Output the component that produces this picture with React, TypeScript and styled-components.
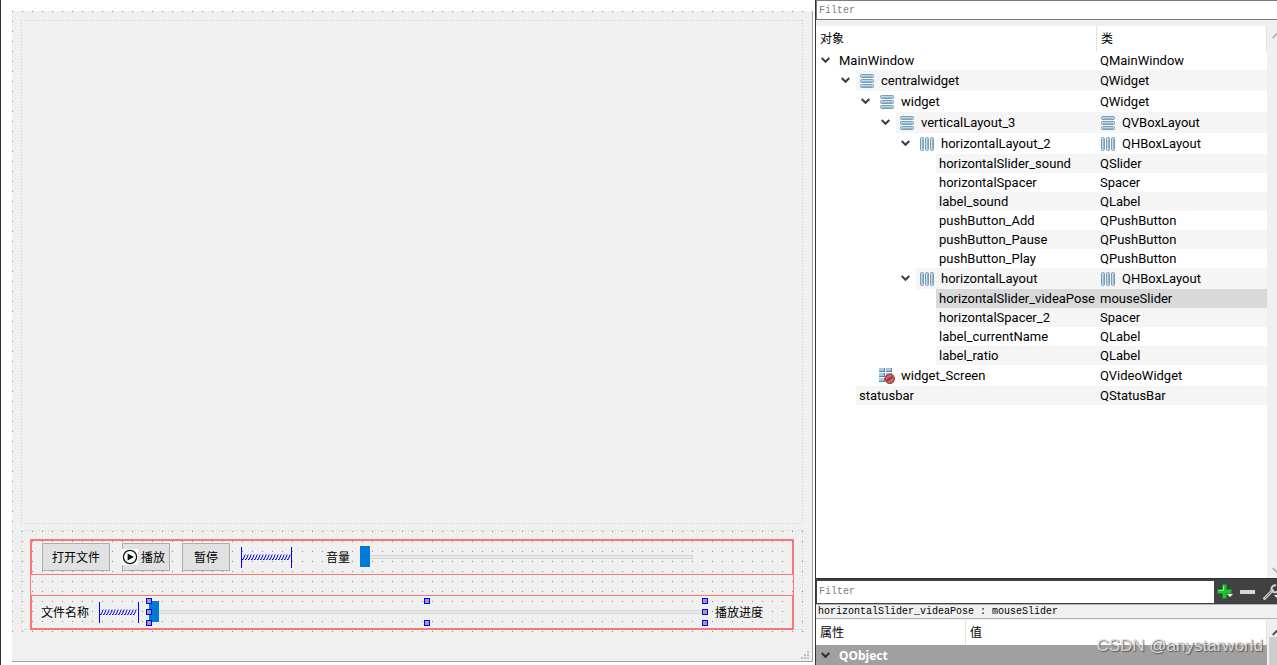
import React from "react";
import styled, { createGlobalStyle, css } from "styled-components";

const GlobalStyle = createGlobalStyle`
  * { box-sizing: border-box; }
  body {
    margin: 0;
    background: #fff;
    color: #000;
    font: 12px/18px "Noto Sans CJK SC", sans-serif;
    overflow: hidden;
  }
  button, input { font: inherit; color: inherit; margin: 0; }
`;

const Window = styled.div`
  display: flex;
  height: 100vh;
`;

/* ---------- form canvas ---------- */

const Canvas = styled.main`
  display: flex;
  flex: 1;
  min-width: 0;
  padding: 11px 2px 3px 11px;
  border-left: 1px solid #303032;
`;

const Form = styled.div`
  position: relative;
  display: flex;
  flex: 1;
  min-width: 0;
  padding: 0 9px 29px 0;
  background: #f0f0f0;
  border-right: 1px solid #a0a0a0;
  border-bottom: 1px solid #a0a0a0;
`;

const SizeGrip = styled.svg`
  position: absolute;
  right: 3px;
  bottom: 2px;
`;

const Grid = styled.div`
  display: flex;
  flex: 1;
  flex-direction: column;
  gap: 6px;
  min-width: 0;
  padding: 9px 0 2px 9px;
  background:
    linear-gradient(to right, transparent 1px, #f0f0f0 1px) 0 0 / 10px 10px,
    linear-gradient(to bottom, #8c8c8c 1px, transparent 1px) 0 0 / 10px 10px;
`;

const dottedEdges = css`
  background-image:
    repeating-linear-gradient(to right, #cfcfcf 0 1px, transparent 1px 3px),
    repeating-linear-gradient(to right, #cfcfcf 0 1px, transparent 1px 3px),
    repeating-linear-gradient(to bottom, #cfcfcf 0 1px, transparent 1px 3px),
    repeating-linear-gradient(to bottom, #cfcfcf 0 1px, transparent 1px 3px);
  background-size: 100% 1px, 100% 1px, 1px 100%, 1px 100%;
  background-position: left top, left bottom, left top, right top;
  background-repeat: no-repeat;
`;

const VideoScreen = styled.section`
  flex: 1;
  background-color: #f0f0f0;
  ${dottedEdges}
`;

const ControlWidget = styled.section`
  padding: 9px 9px 0;
  ${dottedEdges}
`;

const RED = "rgba(255, 88, 88, 0.8)";

const LayoutRow = styled.div<{ $place: "top" | "bottom" }>`
  display: flex;
  align-items: center;
  gap: 10px;
  border: 2px solid ${RED};
  ${(p) =>
    p.$place === "top"
      ? css`
          height: 36px;
          padding: 0 99px 1px 10px;
          border-bottom-width: 1px;
        `
      : css`
          height: 35px;
          padding: 0 29px 0 9px;
          border-top-width: 1px;
        `}
`;

const LayoutGap = styled.div`
  height: 20px;
  border: solid ${RED};
  border-width: 0 1px;
`;

const ButtonGroup = styled.div`
  display: flex;
  gap: 12px;
  padding-right: 1px;
`;

const PushButton = styled.button<{ $icon?: boolean }>`
  display: flex;
  align-items: center;
  gap: 3px;
  height: 28px;
  padding: ${(p) => (p.$icon ? "0 4px 0 0" : "0 9px 0 9px")};
  min-width: ${(p) => (p.$icon ? "48px" : "0")};
  border: 1px solid #adadad;
  background: #e1e1e1;
  white-space: nowrap;

  &:last-child {
    padding: 0 11px;
  }
`;

const PlayGlyph = styled.svg`
  flex: none;
  margin-left: -1px;
`;

const Caption = styled.label<{ $indent?: boolean }>`
  flex: none;
  padding-left: ${(p) => (p.$indent ? "24px" : "0")};
  white-space: nowrap;
`;

const SpacerMark = styled.svg`
  flex: none;
`;

const SliderFrame = styled.div`
  position: relative;
  flex: 1;
  min-width: 0;
  height: 22px;
`;

const Slider = styled.input`
  display: block;
  width: 100%;
  height: 22px;
  appearance: none;
  background: transparent;

  &::-webkit-slider-runnable-track {
    height: 4px;
    border: 1px solid #d6d6d6;
    background: #e7eaea;
  }
  &::-webkit-slider-thumb {
    appearance: none;
    width: 10px;
    height: 21px;
    margin: -10px 0 0 -1px;
    border: 0;
    border-radius: 0;
    background: #007ad9;
  }
`;

const Handle = styled.span<{ $x: string; $y: string }>`
  position: absolute;
  left: ${(p) => p.$x};
  top: ${(p) => p.$y};
  width: 6px;
  height: 6px;
  margin: -3px;
  border: 1px solid #00f;
  background: #a0a0a0;
  pointer-events: none;
`;

/* ---------- inspector column ---------- */

const Inspector = styled.aside`
  position: relative;
  display: flex;
  flex: none;
  flex-direction: column;
  width: 462px;
  border-left: 1px solid #303032;
  background: #f0f0f0;
`;

const FilterInput = styled.input<{ $plain?: boolean }>`
  flex: ${(p) => (p.$plain ? "1" : "none")};
  width: 100%;
  min-width: 0;
  height: ${(p) => (p.$plain ? "22px" : "20px")};
  padding: 0 2px;
  border: ${(p) => (p.$plain ? "0" : "1px solid #7a7a7a")};
  border-right-width: 0;
  border-radius: 0;
  outline: 0;
  background: #fff;
  font-family: "Liberation Mono", monospace;
  font-size: 10px;

  &::placeholder {
    color: #808080;
    opacity: 1;
  }
`;

const ObjectPane = styled.div`
  display: flex;
  flex: 1;
  min-height: 0;
  margin-top: 6px;
`;

const TreeView = styled.div`
  flex: 1;
  min-width: 0;
  overflow: hidden;
  background: #fff;
`;

const Table = styled.table`
  width: 100%;
  border-spacing: 0;
  table-layout: fixed;
`;

const HeadCell = styled.th<{ $width?: number }>`
  width: ${(p) => (p.$width ? `${p.$width}px` : "auto")};
  height: 25px;
  padding: 0 4px 2px;
  border-right: 1px solid #e2e2e2;
  font-weight: normal;
  text-align: left;
`;

const BodyCell = styled.td`
  padding: 0;
`;

const Branch = styled.div<{ $level: number }>`
  display: flex;
  padding-left: ${(p) => p.$level * 20}px;
`;

const Expander = styled.button`
  display: flex;
  align-items: center;
  justify-content: center;
  flex: none;
  width: 20px;
  padding: 0 1px 2px 0;
  border: 0;
  background: none;
`;

const ExpanderGap = styled.span`
  flex: none;
  width: 20px;
`;

type Tone = "plain" | "alt" | "selected";

const toneColor: Record<Tone, string> = {
  plain: "#fff",
  alt: "#f5f5f5",
  selected: "#d9d9d9",
};

const Item = styled.div<{ $tone: Tone; $tall?: boolean }>`
  display: flex;
  align-items: center;
  flex: 1;
  gap: 6px;
  min-width: 0;
  height: ${(p) => (p.$tall ? "21px" : "19px")};
  padding-left: 3px;
  background: ${(p) => toneColor[p.$tone]};
  font: 13px/19px Roboto, sans-serif;
  white-space: nowrap;
`;

const ScrollStrip = styled.div`
  display: flex;
  flex: none;
  flex-direction: column;
  justify-content: space-between;
  width: 10px;
  padding: 6px 0 4px 5px;
  overflow: hidden;
  background: #f0f0f0;
`;

const PropertyToolbar = styled.div`
  display: flex;
  align-items: center;
  flex: none;
  height: 26px;
  padding-left: 1px;
  overflow: hidden;
  border-top: 1px solid #303032;
  background: #404142;
`;

const ToolButtons = styled.div`
  display: flex;
  flex: none;
  gap: 7px;
  width: 63px;
  padding-left: 3px;
`;

const ToolButton = styled.button`
  display: flex;
  flex: none;
  padding: 0;
  border: 0;
  background: none;
`;

const SelectedObject = styled.div`
  flex: none;
  height: 15px;
  padding-left: 2px;
  border: solid #b4b4b4;
  border-width: 1px 0;
  font: 10px/13px "Liberation Mono", monospace;
  white-space: pre;
`;

const PropertyPane = styled.div`
  display: flex;
  flex: none;
  height: 46px;
  padding-top: 1px;
`;

const GroupCell = styled.td`
  padding: 0;
  background: #a0a0a0;
  color: #fff;
  font: bold 12px/20px "Noto Sans", sans-serif;
`;

const GroupTitle = styled.div`
  display: flex;
  align-items: center;
  gap: 3px;
  height: 21px;
`;

const PropertyScroll = styled.div`
  flex: none;
  width: 10px;
  padding: 3px 0 0 5px;
  overflow: hidden;
  background: linear-gradient(#f0f0f0 17px, #cdcdcd 17px) 2px 0 no-repeat;
`;

const Watermark = styled.div`
  position: absolute;
  right: 14px;
  bottom: 8px;
  color: rgba(225, 225, 225, 0.9);
  font: 17px/22px "Liberation Sans", Arial, sans-serif;
  text-shadow: 1px 1px 1px rgba(70, 70, 70, 0.8);
  pointer-events: none;
`;

/* ---------- drawings ---------- */

const Chevron = ({ up, color = "#404040" }: { up?: boolean; color?: string }) => (
  <svg width="9" height="8" viewBox="0 0 9 8" fill="none" stroke={color} strokeWidth="2">
    <path d={up ? "M0.7 6L4.5 2.2L8.3 6" : "M0.7 2L4.5 5.8L8.3 2"} />
  </svg>
);

const Spring = ({ width }: { width: number }) => {
  const strokes: string[] = [];
  for (let x = 1; x < width - 3; x += 3) {
    strokes.push(`M${x} 12.5 L${x + 1.2} 12.5 L${x + 3.2} 7.5`);
  }
  return (
    <SpacerMark width={width} height="21" viewBox={`0 0 ${width} 21`} fill="none" stroke="#00f">
      <path d={`M0.5 0V21M${width - 0.5} 0V21`} shapeRendering="crispEdges" />
      <path d={strokes.join("")} />
    </SpacerMark>
  );
};

type IconName = "vertical" | "horizontal" | "broken";

const LayoutIcon = ({ name }: { name: IconName }) => (
  <svg width="16" height="16" viewBox="0 0 16 16">
    {name === "vertical" &&
      [1, 6, 11].map((y) => (
        <g key={y}>
          <rect x="1.5" y={y + 0.5} width="13" height="3" rx="1" fill="#a9dcf8" stroke="#8399ad" />
          <path d={`M3 ${y + 2.5}H13`} stroke="#93b9d3" />
        </g>
      ))}
    {name === "horizontal" &&
      [1, 6, 11].map((x) => (
        <g key={x}>
          <rect x={x + 0.5} y="1.5" width="3" height="13" rx="1" fill="#b8e0f5" stroke="#8399ad" />
          <path d={`M${x + 2.5} 3V13`} stroke="#93b9d3" />
        </g>
      ))}
    {name === "broken" && (
      <g>
        {[0, 5, 10].map((y) =>
          [0, 7].map((x) => (
            <g key={`${x}-${y}`}>
              <rect x={x} y={y} width="6" height="4" fill="#9dcbe6" />
              <path d={`M${x} ${y + 3.5}H${x + 6}M${x + 5.5} ${y}V${y + 4}`} stroke="#667c97" />
            </g>
          )),
        )}
        <circle cx="10.8" cy="10.8" r="4.6" fill="#c86666" stroke="#a23c3c" strokeWidth="1.2" />
        <path d="M7.8 12.8L13.6 8.6" stroke="#8b3030" strokeWidth="1.6" />
      </g>
    )}
  </svg>
);

/* ---------- data ---------- */

interface Node {
  level: number;
  name: string;
  type: string;
  open?: boolean;
  icon?: IconName;
  typeIcon?: IconName;
  selected?: boolean;
}

const nodes: Node[] = [
  { level: 0, name: "MainWindow", type: "QMainWindow", open: true },
  { level: 1, name: "centralwidget", type: "QWidget", open: true, icon: "vertical" },
  { level: 2, name: "widget", type: "QWidget", open: true, icon: "vertical" },
  { level: 3, name: "verticalLayout_3", type: "QVBoxLayout", open: true, icon: "vertical", typeIcon: "vertical" },
  { level: 4, name: "horizontalLayout_2", type: "QHBoxLayout", open: true, icon: "horizontal", typeIcon: "horizontal" },
  { level: 5, name: "horizontalSlider_sound", type: "QSlider" },
  { level: 5, name: "horizontalSpacer", type: "Spacer" },
  { level: 5, name: "label_sound", type: "QLabel" },
  { level: 5, name: "pushButton_Add", type: "QPushButton" },
  { level: 5, name: "pushButton_Pause", type: "QPushButton" },
  { level: 5, name: "pushButton_Play", type: "QPushButton" },
  { level: 4, name: "horizontalLayout", type: "QHBoxLayout", open: true, icon: "horizontal", typeIcon: "horizontal" },
  { level: 5, name: "horizontalSlider_videaPose", type: "mouseSlider", selected: true },
  { level: 5, name: "horizontalSpacer_2", type: "Spacer" },
  { level: 5, name: "label_currentName", type: "QLabel" },
  { level: 5, name: "label_ratio", type: "QLabel" },
  { level: 2, name: "widget_Screen", type: "QVideoWidget", icon: "broken" },
  { level: 1, name: "statusbar", type: "QStatusBar" },
];

const handles: [string, string][] = [
  ["0%", "0%"],
  ["0%", "50%"],
  ["0%", "100%"],
  ["50%", "0%"],
  ["50%", "100%"],
  ["100%", "0%"],
  ["100%", "50%"],
  ["100%", "100%"],
];

const TreeRow = ({ node, index }: { node: Node; index: number }) => {
  const tone: Tone = node.selected ? "selected" : index % 2 ? "alt" : "plain";
  const tall = Boolean(node.icon);
  return (
    <tr>
      <BodyCell>
        <Branch $level={node.level}>
          {node.open ? (
            <Expander aria-label={`Collapse ${node.name}`}>
              <Chevron />
            </Expander>
          ) : (
            <ExpanderGap />
          )}
          <Item $tone={tone} $tall={tall}>
            {node.icon && <LayoutIcon name={node.icon} />}
            {node.name}
          </Item>
        </Branch>
      </BodyCell>
      <BodyCell>
        <Item $tone={tone} $tall={tall}>
          {node.typeIcon && <LayoutIcon name={node.typeIcon} />}
          {node.type}
        </Item>
      </BodyCell>
    </tr>
  );
};

export default function App() {
  return (
    <>
      <GlobalStyle />
      <Window>
        <Canvas>
          <Form>
            <Grid>
              <VideoScreen />
              <ControlWidget>
                <LayoutRow $place="top">
                  <ButtonGroup>
                    <PushButton>打开文件</PushButton>
                    <PushButton $icon>
                      <PlayGlyph width="16" height="16" viewBox="0 0 16 16">
                        <rect width="16" height="16" fill="#fff" />
                        <circle cx="8" cy="8" r="6.6" fill="none" stroke="#111" strokeWidth="1.3" />
                        <path d="M5.6 4.4L12 8L5.6 11.6Z" fill="#111" />
                      </PlayGlyph>
                      播放
                    </PushButton>
                    <PushButton>暂停</PushButton>
                  </ButtonGroup>
                  <Spring width={51} />
                  <Caption htmlFor="volume" $indent>
                    音量
                  </Caption>
                  <SliderFrame>
                    <Slider id="volume" type="range" min={0} max={99} defaultValue={0} />
                  </SliderFrame>
                </LayoutRow>
                <LayoutGap />
                <LayoutRow $place="bottom">
                  <Caption as="span">文件名称</Caption>
                  <Spring width={40} />
                  <SliderFrame>
                    <Slider id="progress" type="range" min={0} max={99} defaultValue={0} />
                    {handles.map(([x, y]) => (
                      <Handle key={x + y} $x={x} $y={y} />
                    ))}
                  </SliderFrame>
                  <Caption htmlFor="progress">播放进度</Caption>
                </LayoutRow>
              </ControlWidget>
            </Grid>
            <SizeGrip width="8" height="8" viewBox="0 0 8 8" fill="#bfbfbf">
              <path d="M6 0h2v2h-2zM3 3h2v2h-2zM6 3h2v2h-2zM0 6h2v2h-2zM3 6h2v2h-2zM6 6h2v2h-2z" />
            </SizeGrip>
          </Form>
        </Canvas>

        <Inspector>
          <FilterInput placeholder="Filter" aria-label="Filter objects" />
          <ObjectPane>
            <TreeView>
              <Table>
                <thead>
                  <tr>
                    <HeadCell $width={281}>对象</HeadCell>
                    <HeadCell>类</HeadCell>
                  </tr>
                </thead>
                <tbody>
                  {nodes.map((node, i) => (
                    <TreeRow key={node.name} node={node} index={i} />
                  ))}
                </tbody>
              </Table>
            </TreeView>
            <ScrollStrip>
              <Chevron up color="#b8b8b8" />
              <Chevron color="#b8b8b8" />
            </ScrollStrip>
          </ObjectPane>

          <PropertyToolbar>
            <FilterInput $plain placeholder="Filter" aria-label="Filter properties" />
            <ToolButtons>
              <ToolButton aria-label="Add">
                <svg width="16" height="16" viewBox="0 0 16 16">
                  <path d="M5.5 0.5h4v5h5v4h-5v5h-4v-5h-5v-4h5z" fill="#16c925" />
                  <path d="M6.5 1.5V6.5H1.5" fill="none" stroke="#7df58a" />
                  <path d="M10 10h6l-3 3z" fill="#fff" />
                </svg>
              </ToolButton>
              <ToolButton aria-label="Remove">
                <svg width="16" height="16" viewBox="0 0 16 16">
                  <rect x="0" y="6" width="15" height="4" fill="#d8d6d8" />
                </svg>
              </ToolButton>
              <ToolButton aria-label="Configure">
                <svg width="16" height="16" viewBox="0 0 16 16">
                  <path d="M1.5 14.5L9.5 6.5" stroke="#c9c9c9" strokeWidth="3" strokeLinecap="round" />
                  <path d="M2 14L9 7" stroke="#777" />
                  <path d="M13 1.5A3.5 3.5 0 1 0 15.5 5" fill="none" stroke="#d0d0d0" strokeWidth="2" />
                  <path d="M11 11h6l-3 3z" fill="#fff" />
                </svg>
              </ToolButton>
            </ToolButtons>
          </PropertyToolbar>
          <SelectedObject>horizontalSlider_videaPose : mouseSlider</SelectedObject>
          <PropertyPane>
            <TreeView>
              <Table>
                <thead>
                  <tr>
                    <HeadCell $width={150}>属性</HeadCell>
                    <HeadCell>值</HeadCell>
                  </tr>
                </thead>
                <tbody>
                  <tr>
                    <GroupCell colSpan={2}>
                      <GroupTitle>
                        <Expander aria-label="Collapse QObject">
                          <Chevron color="#303030" />
                        </Expander>
                        QObject
                      </GroupTitle>
                    </GroupCell>
                  </tr>
                </tbody>
              </Table>
            </TreeView>
            <PropertyScroll>
              <Chevron up color="#505050" />
            </PropertyScroll>
          </PropertyPane>
          <Watermark>CSDN @anystarworld</Watermark>
        </Inspector>
      </Window>
    </>
  );
}
